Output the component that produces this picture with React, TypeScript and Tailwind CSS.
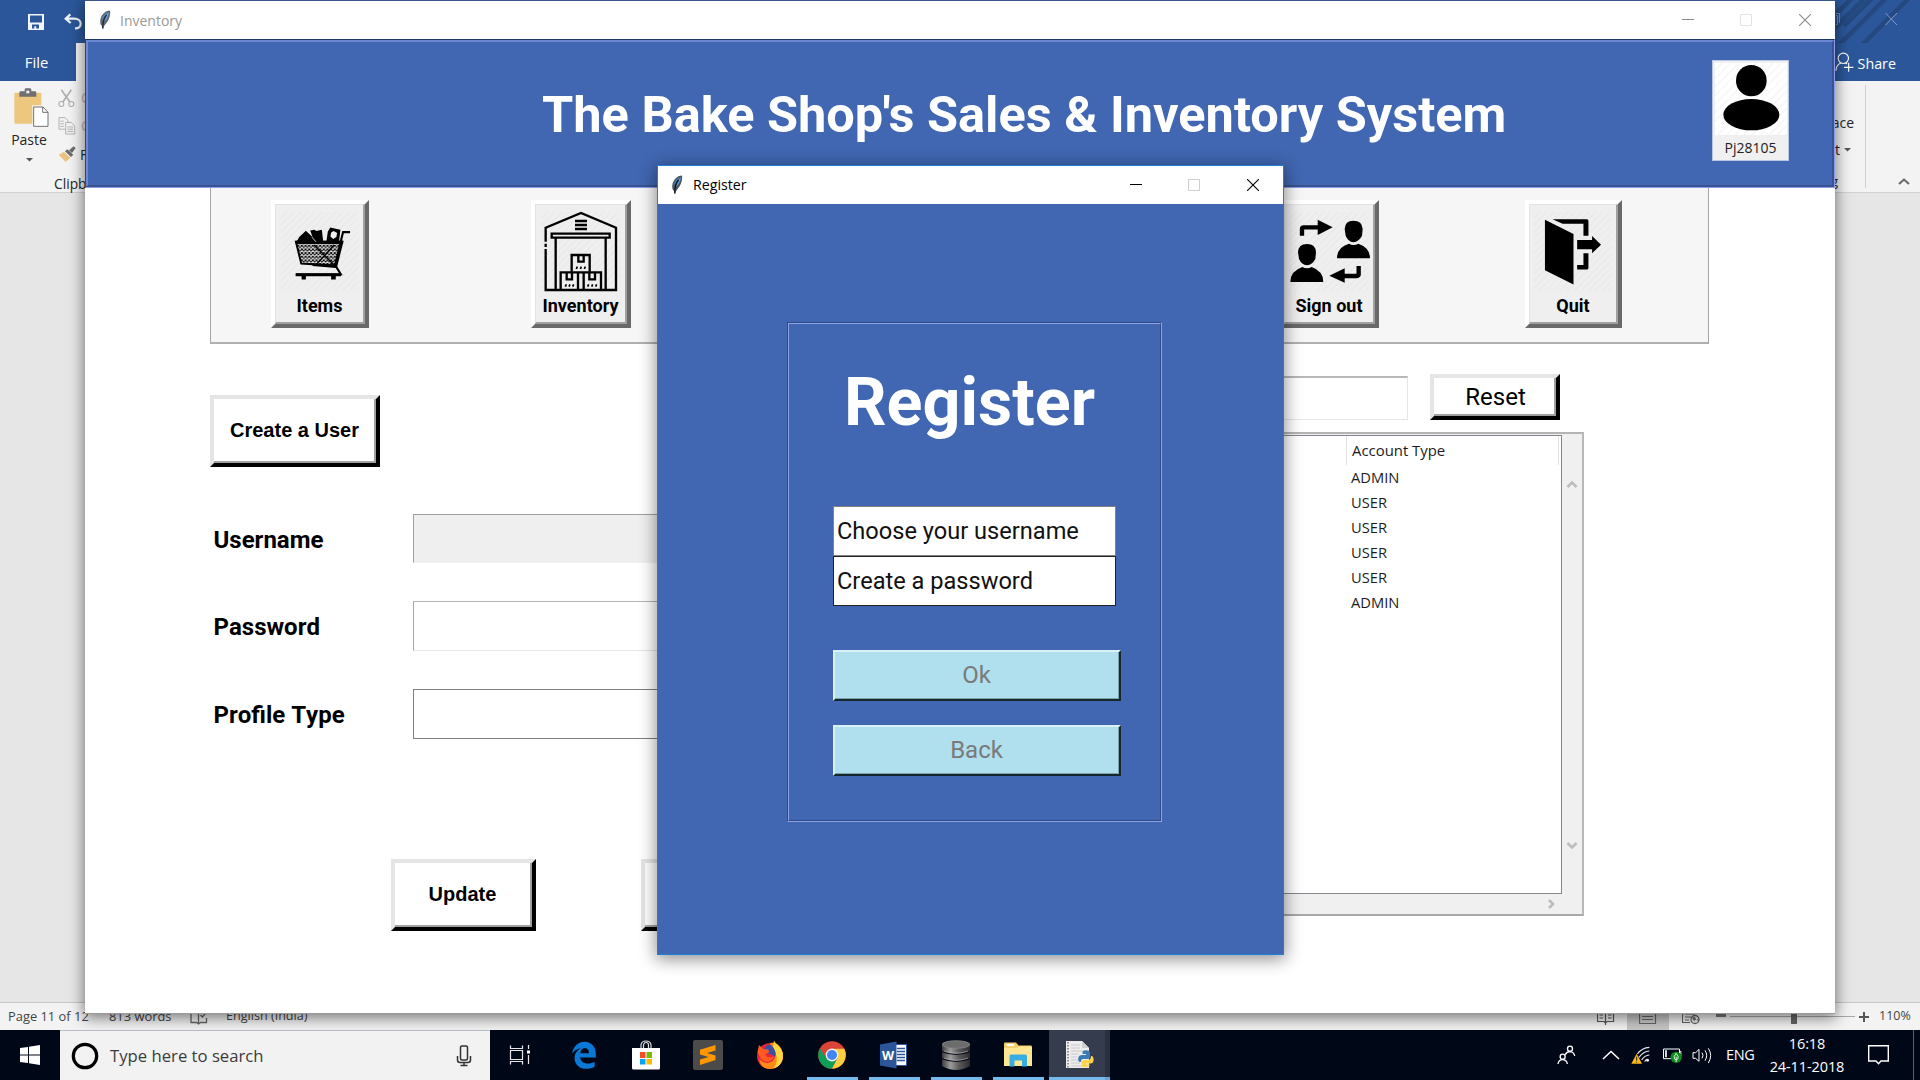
import type { ReactNode } from 'react';

const ui = "font-['Open_Sans','Noto_Sans',sans-serif]";

function Feather({ dim = false }: { dim?: boolean }) {
  return (
    <svg width="12" height="20" viewBox="0 0 12 20" className={dim ? 'opacity-90' : ''}>
      <path d="M11 0.5C7 0.5 3 4 1.6 8.5C0.8 11.5 1.2 14.5 2.6 15.6C3 16 3.3 16.4 4 19.6C4.6 17 5 15.6 6.2 14.4C9.6 11.4 11.8 5 11 0.5Z" fill="#4a5560" />
      <path d="M10 2C7.4 4 6 7.5 5.2 12C7.6 9.6 9.8 5.6 10 2Z" fill="#5c9be0" />
      <path d="M8.600 2C5.400 3.400 3 7 2.600 10.600C4.400 8 6.400 4.800 8.600 2Z" fill="#4a86cc" />
      <path d="M7.500 5C5 8 3.600 12 3.700 18.600" stroke="#0b1420" strokeWidth="1.300" fill="none" />
    </svg>
  );
}

function WindowControls({ color, dim }: { color: string; dim: string }) {
  return (
    <div className="flex items-center">
      <div className="flex w-[58px] justify-center"><svg width="12" height="12"><path d="M0 5.5H12" stroke={color} /></svg></div>
      <div className="flex w-[58px] justify-center"><svg width="12" height="12"><path d="M.5 .5H11.5V11.5H.5Z" stroke={dim} fill="none" /></svg></div>
      <div className="flex w-[60px] justify-center"><svg width="12" height="12"><path d="M0 0L12 12M12 0L0 12" stroke={color} strokeWidth="1.1" /></svg></div>
    </div>
  );
}

/* ---------- Word in the background ---------- */

function WordBackground() {
  return (
    <div className={`flex h-[1030px] w-full flex-col bg-[#e6e6e6] text-[#262626] ${ui}`}>
      <div className="flex h-[43px] shrink-0 items-center justify-between bg-[#2b579a] pl-[28px]">
        <div className="flex items-center gap-[19px]">
          <svg width="16" height="16" viewBox="0 0 16 16"><path fillRule="evenodd" d="M0 0H16V16H0ZM2 1.5V8.5H14V1.5ZM4 10.5V14.5H6.3V12.2H8.2V14.5H11V10.5Z" fill="#f1f4f9" /></svg>
          <svg width="19" height="17" viewBox="190 38 57 51"><path d="M212 42L198 55L213 68M199 55H224C236 55 243 62 243 70C243 79 236 84 226 84" stroke="#f1f4f9" strokeWidth="6.5" fill="none" /></svg>
        </div>
        <svg width="84" height="43" viewBox="0 0 84 43">
          <path d="M-4 18L18 -4M-4 31L31 -4M8 26L38 -4M-4 52L52 -4M21 50L75 -4" stroke="#24497f" strokeWidth="4.500" />
          <path d="M0 15.500H1.500V24.500H0M0 13.500H3.500V23" stroke="#6f8fbf" fill="none" />
          <path d="M49.500 13L61 25M61 13L49.500 25" stroke="#7f9bc8" />
        </svg>
      </div>
      <div className="flex h-[38px] shrink-0 bg-[#2b579a] text-white">
        <div className="flex w-[76px] items-center justify-center pr-[3px] text-[14.800px]">File</div>
        <div className="w-[90px] bg-[#f3f3f3]" />
        <div className="ml-auto flex items-center gap-1 pr-[24px]">
          <svg width="19" height="20" viewBox="1190 157 57 60"><g stroke="#fff" strokeWidth="3.500" fill="none"><circle cx="1215" cy="176" r="15.500" /><path d="M1193 213C1193 202 1200 193 1208 190M1222 190L1226 193M1231 189V216M1217 203H1245" /></g></svg>
          <span className="pt-[3px] text-[14.300px]">Share</span>
        </div>
      </div>
      <div className="flex h-[112px] shrink-0 justify-between border-b border-[#d2d2d2] bg-[#f3f3f3]">
        <div className="flex">
          <div className="flex w-[58px] flex-col items-center pt-[7px]">
            <svg width="35" height="39" viewBox="44 265 105 117" className="ml-[5px]">
              <rect x="45" y="279" width="81" height="93" rx="3" fill="#eec77e" />
              <path d="M60 291V279Q60 275 65 275H76V270Q76 266 80 266H91Q96 266 96 270V275H106Q111 275 111 279V291Z" fill="#6f6f6f" />
              <rect x="81" y="273" width="9" height="8" fill="#f3f3f3" />
              <path d="M99 317H135L150 334V385H99Z" fill="#f3f3f3" />
              <path d="M103 322H131L146 338V380H103Z" fill="#fff" stroke="#737373" strokeWidth="3" />
              <path d="M130 322V338H146" stroke="#737373" strokeWidth="3" fill="none" />
            </svg>
            <span className="mt-[2px] text-[14px] leading-[22px]">Paste</span>
            <svg width="7" height="4" className="mt-[7px]"><path d="M0 0H7L3.500 3.500Z" fill="#555" /></svg>
          </div>
          <div className="flex flex-col">
            <div className="flex h-[28px] items-center gap-[6px] pt-[6px] text-[14px] text-[#b5b0b8]">
              <svg width="17" height="18" viewBox="173 266 51 54"><g stroke="#b1aeb3" strokeWidth="3.500" fill="none"><circle cx="183" cy="311" r="7.500" /><circle cx="213" cy="311" r="7.500" /><path d="M183 268L208 304M213 268L188 304" strokeWidth="5" /></g></svg>
              <span>Cut</span>
            </div>
            <div className="flex h-[28px] items-center gap-[5px] pt-[7px] text-[14px] text-[#b5b0b8]">
              <svg width="18" height="18" viewBox="173 350 54 56"><g stroke="#b1aeb3" strokeWidth="3" fill="#f3f3f3"><path d="M175 352H194L203 361V388H175Z" /><path d="M179 363H190M179 371H190M179 379H190" /><path d="M196 367H213L224 378V403H196Z" /><path d="M201 381H219M201 388H219M201 395H219" /></g></svg>
              <span>Copy</span>
            </div>
            <div className="flex h-[28px] items-center gap-[4px] pt-[8px] text-[14px]">
              <svg width="18" height="16" viewBox="174 437 54 48"><path d="M176 463L192 455L211 472L197 485Z" fill="#ecc37c" /><path d="M195 453L202 447L220 463L213 470ZM207 450L221 438L227 443L216 458Z" fill="#6b6b6b" /></svg>
              <span>Format Painter</span>
            </div>
            <span className="mt-[8px] -ml-1 text-[13.800px] leading-[24px]">Clipboard</span>
          </div>
        </div>
        <div className="flex">
          <div className="flex w-[60px] flex-col items-end pr-[17px] text-[14px]">
            <svg width="7" height="4" className="mt-[15px] mr-[2px]"><path d="M0 0H7L3.500 3.500Z" fill="#555" /></svg>
            <span className="mt-[16px] -mr-[6px] leading-[22px]">Replace</span>
            <span className="-mr-[3px] mt-[5px] flex items-center gap-1 leading-[22px]">Select<svg width="7" height="4"><path d="M0 0H7L3.500 3.500Z" fill="#555" /></svg></span>
            <span className="mt-[9px] mr-[10px] text-[13.500px] leading-[22px]">Editing</span>
          </div>
          <div className="my-1 w-px bg-[#d0d0d0]" />
          <div className="flex w-[54px] items-end pb-[7px] pl-[32px]">
            <svg width="12" height="7"><path d="M1 6L6 1.500L11 6" stroke="#666" strokeWidth="2" fill="none" /></svg>
          </div>
        </div>
      </div>
      <div className="grow" />
      <div className="flex h-[28px] shrink-0 items-center border-t border-[#c6c6c6] bg-[#f3f3f3] text-[12.900px] text-[#444]">
        <span className="w-[101px] pl-2 whitespace-nowrap">Page 11 of 12</span>
        <span className="w-[81px] pl-2 whitespace-nowrap">813 words</span>
        <svg width="18" height="16" className="ml-2"><path d="M1 3V13.500H6.500L8.500 15L10.500 13.500H16.500V9M1 3H8.500V14M10.500 6L12.500 8L16.500 3" stroke="#666" strokeWidth="1.300" fill="none" /></svg>
        <span className="ml-[18px] text-[12.600px] whitespace-nowrap">English (India)</span>
        <div className="ml-auto flex h-full items-center">
          <svg width="18" height="16"><path d="M.5 2.500H7L8.500 4L10 2.500H16.500V12.500H10L8.500 14L7 12.500H.5ZM8.500 4V16M2.500 6H6M2.500 9H6M11 6H14.500M11 9H14.500" stroke="#555" strokeWidth="1.200" fill="none" /></svg>
          <div className="ml-[12px] flex h-full w-[42px] items-center justify-center bg-[#c8c8c8]"><svg width="18" height="17"><path d="M.5 0V15.500H16.500V0M3 5.500H14M3 8.500H14M3 11.500H14" stroke="#666" strokeWidth="1.200" fill="none" /></svg></div>
          <svg width="18" height="16" className="ml-[13px]"><path d="M.5 1V13.500H8M3 5H13M3 8H9M3 11H7" stroke="#666" strokeWidth="1.200" fill="none" /><circle cx="13" cy="10.500" r="4" fill="#ececec" stroke="#666" strokeWidth="1.300" /><path d="M10 8.500L13 8L14 10.500L12 12ZM14.500 11L16.500 9.500V12Z" fill="#666" /></svg>
          <div className="ml-[16px] h-[3px] w-[10px] -translate-y-[1px] bg-[#777]" />
          <div className="ml-1 flex h-px w-[125px] items-center bg-[#a8a8a8]"><div className="ml-[61px] h-[15px] w-[6px] bg-[#666]" /></div>
          <svg width="12" height="12" className="ml-[3px]"><path d="M6 1V11M1 6H11" stroke="#555" strokeWidth="2" /></svg>
          <span className="mr-[9px] ml-[9px] w-[32px] text-[12.500px]">110%</span>
        </div>
      </div>
    </div>
  );
}

/* ---------- Inventory window ---------- */

function ToolButton({ label, icon, className }: { label: string; icon: ReactNode; className: string }) {
  return (
    <div className={`h-[128px] shrink-0 border-4 border-t-white border-r-[#696969] border-b-[#696969] border-l-white ${className}`}>
      <div className="flex h-full flex-col items-center border-t border-r-2 border-b-2 border-l border-t-[#e3e3e3] border-r-[#a0a0a0] border-b-[#a0a0a0] border-l-[#e3e3e3] bg-[#efefef] pt-[7px]">
        <div className="flex h-[79px] w-[78px] justify-center bg-[repeating-linear-gradient(135deg,#efefef_0px,#efefef_3px,#ebebeb_3px,#ebebeb_5px)]">{icon}</div>
        <span className="text-[18px] leading-[29px] font-bold whitespace-nowrap">{label}</span>
      </div>
    </div>
  );
}

function CartIcon() {
  return (
    <svg width="78" height="79" viewBox="245 97 235 237">
      <defs>
        <pattern id="mesh" width="11" height="11" patternUnits="userSpaceOnUse"><rect width="11" height="11" fill="#efefef" /><path d="M0 0L11 11M11 0L0 11" stroke="#000" strokeWidth="2.800" /></pattern>
      </defs>
      <path d="M290 186H430L412 258L306 252Z" fill="url(#mesh)" stroke="#000" strokeWidth="6" />
      <path d="M289 183H432V193H289Z" />
      <path d="M293 184L300 172L320 153L340 172L333 152L345 150L352 154L368 150L372 184Z" />
      <path d="M382 184L386 156L393 143L424 150L420 184Z" />
      <path d="M396 158L404 154L414 160L412 172L402 178L394 170Z" fill="#efefef" />
      <path d="M338 172L350 186" stroke="#efefef" strokeWidth="2.500" />
      <path d="M453 157H432L408 256L425 284H290M340 256L410 262" stroke="#000" strokeWidth="6.500" fill="none" />
      <path d="M345 196L405 256M405 196L350 256" stroke="#000" strokeWidth="4" fill="none" />
      <path d="M307 284H320V300H307ZM396 284H410V300H396ZM289 282H426V290H289Z" />
    </svg>
  );
}

function WarehouseIcon() {
  return (
    <svg width="80" height="81" viewBox="1025 94 240 243" className="-mt-[1px] shrink-0">
      <g stroke="#000" strokeWidth="7" fill="none">
        <path d="M1039 186V144L1145 100L1250 144V331H1039V208M1039 192V202" />
        <path d="M1057 162H1231V174H1057ZM1069 175V330M1219 175V330" />
        <path d="M1127 124H1163M1127 136H1163M1127 148H1163" />
        <path d="M1117 276V226H1171V276M1137 226V246H1153V226" />
        <path d="M1084 330V278H1205V330M1136 280V330M1153 280V330M1102 280V299H1118V280M1170 280V299H1187V280" />
      </g>
      <path d="M1131 268L1134 261M1143 268L1146 261M1155 268L1158 261M1098 321L1101 314M1109 321L1112 314M1120 321L1123 314M1165 321L1168 314M1177 321L1180 314M1189 321L1192 314" stroke="#000" strokeWidth="5" />
    </svg>
  );
}

function SwitchUserIcon() {
  return (
    <svg width="80" height="79" viewBox="61 97 240 237" className="shrink-0 translate-x-px">
      <path d="M225 148Q226 123 251 123Q278 123 279 148L277 168Q268 186 251 188Q235 186 228 168ZM202 236Q202 202 238 192Q252 200 266 192Q301 204 301 236Z" />
      <path d="M85 218Q86 193 112 193Q138 193 139 218L137 238Q128 255 112 257Q96 255 88 238ZM62 307Q62 274 98 262Q112 270 126 262Q161 274 161 307Z" />
      <path d="M97 168V147Q97 143 102 143H146" stroke="#000" strokeWidth="13" fill="none" />
      <path d="M144 120L189 143L144 166Z" />
      <path d="M267 259V284Q267 289 261 289H222" stroke="#000" strokeWidth="13" fill="none" />
      <path d="M225 266L179 288L225 309Z" />
    </svg>
  );
}

function DoorIcon() {
  return (
    <svg width="78" height="79" viewBox="796 97 235 237">
      <path d="M829 120L915 163V315L829 272Z" />
      <path d="M852 118H955Q960 118 960 123V168H945V132H882ZM926 181H971V169L998 195L971 221V209H926ZM945 221H960V265Q960 270 955 270H926V256H945Z" />
    </svg>
  );
}

function RaisedButton({ children, className }: { children?: ReactNode; className: string }) {
  return (
    <div className={`shrink-0 border-4 border-t-[#e5e5e5] border-r-black border-b-black border-l-[#e5e5e5] ${className}`}>
      <div className="flex h-full items-center justify-center border-r-2 border-b-2 border-[#a0a0a0] bg-white">{children}</div>
    </div>
  );
}

function Header() {
  return (
    <div className="flex h-[149px] shrink-0 justify-between border border-t-[#1f3566] border-r-[#8c9bea] border-b-[#8c9bea] border-l-[#2b4580]">
      <div className="flex grow justify-between border-2 border-t-[#6c88d2] border-r-[#38538f] border-b-[#38538f] border-l-[#6c88d2] bg-[#4167b2] pr-[43px] pl-[454px]">
        <h1 className="pt-[43px] text-[50.500px] leading-[60px] font-bold whitespace-nowrap text-white">The Bake Shop's Sales &amp; Inventory System</h1>
        <div className={`mt-[18px] flex h-[101px] w-[77px] flex-col items-center border border-[#b9c6e4] bg-[#f0f0f0] pt-[2px] ${ui}`}>
          <div className="h-[72px] w-[72px] bg-[repeating-linear-gradient(135deg,#ffffff_0px,#ffffff_4px,#f8f8f8_4px,#f8f8f8_6px)]">
            <svg width="72" height="72" viewBox="824 189 216 216"><ellipse cx="933" cy="242" rx="46" ry="47" /><ellipse cx="933" cy="344" rx="84" ry="47" /></svg>
          </div>
          <span className="mt-[2px] text-[14px] leading-[22px] text-[#222]">Pj28105</span>
        </div>
      </div>
    </div>
  );
}

const accountTypes = ['ADMIN', 'USER', 'USER', 'USER', 'USER', 'ADMIN'];

function AccountTable() {
  return (
    <div className={`mt-[12px] -mr-px flex h-[484px] w-[484px] flex-col border-2 border-t-[#b4b4b4] border-r-[#b8b8b8] border-b-[#a8a8a8] border-l-[#a0a0a0] bg-[#f0f0f0] text-[#1c1c1c] ${ui}`}>
      <div className="flex h-[460px] shrink-0">
        <div className="mt-px w-[460px] border border-[#828790] bg-white">
          <div className="flex h-[29px]">
            <div className="w-[243px]" />
            <div className="flex grow items-center border-x border-[#e3e3e3] pl-[5px] text-[14.900px]">Account Type</div>
            <div className="w-[2px]" />
          </div>
          {accountTypes.map((type, i) => (
            <div key={i} className="flex h-[25px] items-center pl-[248px] text-[14.700px]">{type}</div>
          ))}
        </div>
        <div className="flex grow flex-col items-center justify-between pt-[46px] pb-[44px]">
          <svg width="12" height="8"><path d="M1.500 7L6 2.500L10.500 7" stroke="#bdbdbd" strokeWidth="2.600" fill="none" /></svg>
          <svg width="12" height="8"><path d="M1.500 1L6 5.500L10.500 1" stroke="#bdbdbd" strokeWidth="2.600" fill="none" /></svg>
        </div>
      </div>
      <div className="flex grow items-center justify-end pr-[26px]">
        <svg width="9" height="10"><path d="M2 1L6 5L2 9" stroke="#bdbdbd" strokeWidth="2.600" fill="none" /></svg>
      </div>
    </div>
  );
}

const fields = [
  { label: 'Username', box: 'h-[49px] border-t-[#a0a0a0] border-l-[#a0a0a0] border-b-[#f2f2f2] border-r-[#f2f2f2] bg-[#efefef]' },
  { label: 'Password', box: 'h-[50px] border-t-[#b4b4b4] border-l-[#a8a8a8] border-b-[#e6e6e6] border-r-[#e6e6e6] bg-white' },
  { label: 'Profile Type', box: 'h-[50px] border-[#7e7e7e] bg-white' },
];

function InventoryWindow() {
  return (
    <div className="absolute top-0 left-[85px] flex h-[1014px] w-[1750px] flex-col border-t border-b border-t-[#3a5588] border-b-[#999] bg-white shadow-[0_3px_14px_1px_rgba(0,0,0,0.5)]">
      <div className={`flex h-[38px] shrink-0 items-center ${ui}`}>
        <div className="pl-[14px]"><Feather dim /></div>
        <span className="pl-[9px] text-[14px] text-[#999]">Inventory</span>
        <div className="ml-auto"><WindowControls color="#8a8a8a" dim="#e3e3e3" /></div>
      </div>
      <Header />
      <div className="ml-[125px] flex h-[156px] w-[1499px] shrink-0 border-x-[1.500px] border-b-2 border-[#a5a5a5] border-b-[#b0b0b0] bg-[#f6f6f6] pt-[12px] pl-[60px]">
        <ToolButton label="Items" icon={<CartIcon />} className="w-[98px]" />
        <ToolButton label="Inventory" icon={<WarehouseIcon />} className="ml-[162px] w-[100px]" />
        <ToolButton label="Sign out" icon={<SwitchUserIcon />} className="ml-[649px] w-[99px]" />
        <ToolButton label="Quit" icon={<DoorIcon />} className="ml-[146px] w-[97px]" />
      </div>
      <div className="flex grow pl-[125px]">
        <div className="flex w-[600px] flex-col pt-[51px]">
          <RaisedButton className="h-[72px] w-[170px]"><span className="pl-px font-['Liberation_Sans',Arial,sans-serif] text-[20px] font-bold">Create a User</span></RaisedButton>
          <div className="mt-[47px] flex flex-col gap-[38px]">
            {fields.map((f) => (
              <div key={f.label} className="flex items-center">
                <span className="w-[203px] pt-[2px] pl-[3.500px] text-[24px] leading-[46px] font-bold [font-kerning:none]">{f.label}</span>
                <div className={`w-[380px] border ${f.box}`} />
              </div>
            ))}
          </div>
          <div className="mt-[120px] flex gap-[105px] pl-[181px]">
            <RaisedButton className="h-[72px] w-[145px]"><span className="font-['Liberation_Sans',Arial,sans-serif] text-[20px] font-bold">Update</span></RaisedButton>
            <RaisedButton className="h-[72px] w-[145px]" />
          </div>
        </div>
        <div className="flex flex-col items-end pl-[290px]">
          <div className="flex items-start pt-[30px] pr-[23px]">
            <div className="mt-[2px] h-[44px] w-[230px] border border-t-2 border-t-[#b8b8b8] border-r-[#e6e6e6] border-b-[#e6e6e6] border-l-[#b0b0b0]" />
            <RaisedButton className="ml-[22px] h-[46px] w-[130px]"><span className="pt-[2px] pl-[3px] text-[24px] [font-kerning:none]">Reset</span></RaisedButton>
          </div>
          <AccountTable />
        </div>
      </div>
    </div>
  );
}

/* ---------- Register dialog ---------- */

function RegisterButton({ label, className }: { label: string; className: string }) {
  return (
    <div className={`h-[51px] w-[288px] border-t-2 border-r-2 border-b-2 border-l-2 border-t-[#d9f0f6] border-r-[#16282e] border-b-[#16282e] border-l-[#d9f0f6] ${className}`}>
      <div className="flex h-full items-center justify-center border-r border-b border-[#7fa3ad] bg-[#b0dfed] text-[24px] text-[#7a7a7a]">{label}</div>
    </div>
  );
}

function RegisterWindow() {
  return (
    <div className="absolute top-[165px] left-[657px] flex h-[790px] w-[627px] flex-col border border-[#1b7fd6] bg-[#4167b2] shadow-[0_3px_16px_1px_rgba(0,0,0,0.45)]">
      <div className={`flex h-[38px] shrink-0 items-center bg-white ${ui}`}>
        <div className="pl-[13px]"><Feather /></div>
        <span className="pl-[10px] text-[14.200px] text-black">Register</span>
        <div className="ml-auto"><WindowControls color="#000" dim="#cfcfcf" /></div>
      </div>
      <div className="mt-[118px] ml-[129px] h-[500px] w-[375px] border border-t-[#2d4a86] border-r-[#8fa4e6] border-b-[#8fa4e6] border-l-[#2d4a86]">
        <div className="flex h-full flex-col border border-t-[#8fa4e6] border-r-[#2d4a86] border-b-[#2d4a86] border-l-[#8fa4e6] pl-[44px]">
          <h2 className="mt-[38px] pl-[11px] text-[66.500px] leading-[80px] font-bold text-white">Register</h2>
          <div className="mt-[64px] flex h-[50px] w-[283px] items-center border border-[#85817c] bg-white pt-[2px] pl-[3px] text-[23.600px] whitespace-nowrap text-[#111]">Choose your username</div>
          <div className="flex h-[50px] w-[283px] items-center border border-[#222] bg-white pt-[2px] pl-[3px] text-[23.600px] whitespace-nowrap text-[#111]">Create a password</div>
          <RegisterButton label="Ok" className="mt-[44px]" />
          <RegisterButton label="Back" className="mt-[24px]" />
        </div>
      </div>
    </div>
  );
}

/* ---------- Taskbar ---------- */

function Slot({ children, className = '' }: { children: ReactNode; className?: string }) {
  return <div className={`flex h-full w-[62px] shrink-0 items-center justify-center ${className}`}>{children}</div>;
}

function RunningSlot({ children }: { children: ReactNode }) {
  return (
    <div className="flex h-full w-[62px] shrink-0 flex-col items-center">
      <div className="flex h-[47px] items-center pt-[3px]">{children}</div>
      <div className="h-[3px] w-[51px] bg-[#76b9ed]" />
    </div>
  );
}

function Taskbar() {
  return (
    <div className={`flex h-[50px] w-full bg-[#000818] text-white ${ui}`}>
      <div className="flex w-[60px] items-center justify-center">
        <svg width="20" height="20"><path d="M0 3L8 1.900V9.400H0ZM9 1.700L20 0V9.400H9ZM0 10.500H8V18L0 17ZM9 10.500H20V20L9 18.300Z" fill="#fff" /></svg>
      </div>
      <div className="flex w-[430px] items-center border-t border-[#b9bcc4] bg-[#f2f2f2]">
        <svg width="28" height="28" className="ml-[11px]"><circle cx="14" cy="14" r="11.700" stroke="#000" strokeWidth="3.200" fill="none" /></svg>
        <span className="ml-[11px] text-[16.700px] text-[#3b3b3b]">Type here to search</span>
        <svg width="16" height="22" className="mr-[18px] ml-auto"><g stroke="#333" strokeWidth="1.500" fill="none"><rect x="4.500" y="1" width="7" height="14" rx="1.500" /><path d="M1.500 11V15Q1.500 17.500 4 17.500H12Q14.500 17.500 14.500 15V11M8 17.500V20.500M4.500 20.500H11.500" /></g></svg>
      </div>
      <Slot className="pr-[2px]">
        <svg width="22" height="20"><path d="M1.500 .5V3.500H13.500V.5M1.500 5.500H13.500V14.500H1.500ZM1.500 19.500V16.500H13.500V19.500M19.500 0V4M19.500 10V19" stroke="#e8e8e8" strokeWidth="1.200" fill="none" /><rect x="18" y="5.500" width="3" height="3" fill="#fff" /></svg>
      </Slot>
      <div className="w-px" />
      <Slot>
        <svg width="26" height="28" viewBox="0 0 26 28"><path d="M1 12.500C2.500 5 7.500 .8 13.500 .8C20.500 .8 24.800 6 24.800 12.800V16.500H9.200C9.500 20.500 13 22.600 16.800 22.600C19.500 22.600 21.800 21.800 23.600 20.800V25.800C21 27.200 18.300 27.800 15.300 27.800C8.300 27.800 3.600 23.300 3.600 16.900C3.600 12.600 6 9.200 10 7.300C6.500 7.600 3.200 9.600 1 12.500ZM9.300 12.200H18C18 9 16.200 7 13.700 7C11.200 7 9.600 9.200 9.300 12.200Z" fill="#0a78d6" /></svg>
      </Slot>
      <Slot>
        <svg width="30" height="30"><path d="M1 8H29V28Q29 29.500 27.500 29.500H2.500Q1 29.500 1 28Z" fill="#fff" /><path d="M10 8V5Q10.500 1 15 1Q19.500 1 20 5V8M12.500 8V5Q13 2.500 15 2.500Q17.500 2.500 17.500 5V8" stroke="#ddd" strokeWidth="1.200" fill="none" /><path d="M9 12H14.500V18H9Z" fill="#f25022" /><path d="M15.500 12H21V18H15.500Z" fill="#7fba00" /><path d="M9 19H14.500V24.500H9Z" fill="#00a4ef" /><path d="M15.500 19H21V24.500H15.500Z" fill="#ffb900" /></svg>
      </Slot>
      <Slot>
        <svg width="30" height="30"><rect width="30" height="30" rx="2" fill="#4b4b4b" /><path d="M7 9.800L22.500 5V10.400L14 13L22.500 15.500V20L7 25V19.600L15.500 17L7 14.500Z" fill="#ff9800" /></svg>
      </Slot>
      <Slot>
        <svg width="30" height="30" viewBox="0 0 30 30">
          <circle cx="15" cy="16" r="13" fill="#e8253b" />
          <path d="M15 3C22 1 28 8 28 16C28 23.500 22 29 15 29C8 29 4 24 4.500 19C9 25 18 24 20 17C21 12 17 9 15 3Z" fill="#ff8a16" />
          <path d="M19 0.500C20 4 28 7 28 16C28 22 24 27 18.500 28.500C24 22 22 13 17.500 8Z" fill="#ffd83d" />
          <path d="M11 6Q15 3 18 7Q22 13 20 17Q16 13 13 14L9 9Z" fill="#3b4fa8" />
          <path d="M2.500 12L4 5L8 9L13 9.500L14.500 12L10 14.500C12 18 16 18 19 16C18 22 10 24 6 19Z" fill="#ff5a1f" />
        </svg>
      </Slot>
      <RunningSlot>
        <svg width="28" height="28" viewBox="-14 -14 28 28">
          <circle r="13.800" fill="#db4437" />
          <path d="M-11.950 -6.900A13.800 13.800 0 0 0 0 13.800L5.500 3.200L-5.500 3.200Z" fill="#0f9d58" />
          <path d="M0 13.800A13.800 13.800 0 0 0 12.300 -6.300H0L5.500 3.200Z" fill="#ffcd40" />
          <path d="M-11.950 -6.900L-5.500 3.200L0 -6.300H12.300" fill="#db4437" />
          <circle r="6.400" fill="#f1f1f1" /><circle r="5" fill="#4285f4" />
        </svg>
      </RunningSlot>
      <RunningSlot>
        <svg width="28" height="28"><path d="M15 3.500H26.500V24.500H15Z" fill="#fff" stroke="#2b579a" /><path d="M17 7.500H25M17 10.500H25M17 13.500H25M17 16.500H25M17 19.500H25" stroke="#2b579a" strokeWidth="1.400" /><path d="M0 3.500L16.500 .5V27.500L0 24.500Z" fill="#2b579a" /><text x="8" y="18.500" textAnchor="middle" fontSize="12.500" fontWeight="700" fill="#fff" fontFamily="Open Sans, sans-serif">W</text></svg>
      </RunningSlot>
      <RunningSlot>
        <svg width="28" height="30"><defs><linearGradient id="disk"><stop offset="0" stopColor="#3c3c3c" /><stop offset=".3" stopColor="#9c9c9c" /><stop offset=".6" stopColor="#5c5c5c" /><stop offset="1" stopColor="#2c2c2c" /></linearGradient></defs>
          <path d="M0 4V26Q14 34 28 26V4Z" fill="url(#disk)" /><path d="M0 11.500Q14 17.500 28 11.500M0 18.500Q14 24.500 28 18.500" stroke="#0a0f1c" strokeWidth="1.200" fill="none" /><path d="M2 11Q14 15.500 26 11M2 18Q14 22.500 26 18" stroke="#b8b8b8" strokeWidth=".6" fill="none" /><ellipse cx="14" cy="4.500" rx="13.800" ry="3.800" fill="#6c6c6c" stroke="#888" strokeWidth=".8" /></svg>
      </RunningSlot>
      <RunningSlot>
        <svg width="28" height="26"><path d="M0 1.500Q0 .5 1 .5H12L14.500 3.500H27.500V24H0Z" fill="#f3cf6b" /><path d="M2.500 2H10V4H2.500Z" fill="#fff" /><path d="M0 6H13L15 4.500H28V24H0Z" fill="#ffe693" /><path d="M5.500 14Q5.500 12.500 7 12.500H21.500Q23 12.500 23 14V24.500H18V18.500H10.500V24.500H5.500Z" fill="#37aee2" /></svg>
      </RunningSlot>
      <div className="flex h-full">
        <div className="flex w-[56px] flex-col items-center bg-[#343c4e]">
          <div className="flex h-[47px] items-center pt-[3px] pl-[5px]">
            <svg width="29" height="30"><path d="M1 1H17L24 8V28H1Z" fill="#ededed" /><path d="M17 1V8H24Z" fill="#cfcfcf" /><path d="M3 2V28" stroke="#777" strokeWidth="1.500" strokeDasharray="1.500 1.500" /><path d="M6 5H15M6 8H15M6 11H20M6 14H13M6 17H12M6 20H13M6 23H15M6 26H18" stroke="#c9c9c9" /><path d="M19 10.500Q25 9.500 25 13V17Q25 19 22 19H18Q16 19 16 22H14.500Q12.500 21 13.500 17Q14 15 17 15H21V14H17.500V12Q17.500 11 19 10.500Z" fill="#3c7ab5" /><path d="M22 27Q16.500 27.500 16.500 25V22.500Q16.500 20 19.500 20H23Q26 20 26 16H27Q29 17 28.500 21Q28 23.500 25.500 23.500H21V24.500H24.500V26Q24 27 22 27Z" fill="#ffd34a" /></svg>
          </div>
          <div className="h-[3px] w-full bg-[#76b9ed]" />
        </div>
        <div className="flex w-[5px] flex-col justify-end bg-[#2a3040]"><div className="h-[3px] bg-[#6aa3d2]" /></div>
      </div>
      <div className="ml-auto flex items-center">
        <svg width="19" height="20" viewBox="173 193 57 60"><g stroke="#fff" strokeWidth="4" fill="none"><circle cx="212" cy="204" r="7.500" /><circle cx="190" cy="228" r="7.500" /><path d="M176 250Q178 237 190 237Q202 237 204 250M198 222Q201 213 212 213Q224 214 226 226" /></g></svg>
        <svg width="18" height="10" className="ml-[26px]"><path d="M1 9L9 1.500L17 9" stroke="#fff" strokeWidth="1.500" fill="none" /></svg>
        <svg width="20" height="18" viewBox="396 202 58 54" className="ml-[11px]"><g stroke="#e8e8e8" strokeWidth="3.600" fill="none"><path d="M414 226Q428 207 450 206M419 236Q432 218 450 217M427 244Q436 230 450 229" /><path d="M436 249Q440 242 444 241" /></g><circle cx="445" cy="245" r="4" fill="#fff" /><path d="M412 225L428 255H396Z" fill="#fdb913" /><path d="M412 234V246M412 249V252" stroke="#222" strokeWidth="3" /></svg>
        <svg width="21" height="18" viewBox="488 204 60 54" className="ml-[11px]"><path d="M491 213H539V242H491ZM539 220H543V233H539" stroke="#fff" strokeWidth="3" fill="none" /><path d="M496 217H501V238H496Z" fill="#fff" /><circle cx="529" cy="238" r="17" fill="#0f8a1c" /><path d="M529 226Q538 236 534 243L529 246L524 243Q520 236 529 226ZM529 236V252" stroke="#fff" strokeWidth="2.500" fill="none" /></svg>
        <svg width="22" height="18" viewBox="574 196 66 54" className="ml-[9px]"><path d="M577 216H585L595 206V242L585 233H577Z" stroke="#fff" strokeWidth="3" fill="none" /><path d="M604 216Q610 224 604 233M613 209Q623 224 613 240M623 203Q637 224 623 247" stroke="#fff" strokeWidth="3" fill="none" /></svg>
        <span className="ml-[12px] w-[31px] text-[14.500px] tracking-[-0.3px]">ENG</span>
        <div className="ml-[10px] flex w-[80px] flex-col items-center text-[14.500px] leading-[23px] tracking-[-0.1px]"><span>16:18</span><span>24-11-2018</span></div>
        <svg width="21" height="20" className="ml-[21px]"><path d="M.7 .7H20.300V16H13L10.500 18.800L8 16H.7Z" stroke="#fff" strokeWidth="1.400" fill="none" /></svg>
        <div className="ml-[24px] h-[50px] w-px bg-[#5a6070]" />
        <div className="w-[6px]" />
      </div>
    </div>
  );
}

export default function App() {
  return (
    <div className="relative flex h-[1080px] w-[1920px] flex-col overflow-hidden font-['Roboto',sans-serif] text-black">
      <div className="relative h-[1030px] shrink-0 overflow-hidden">
        <WordBackground />
        <InventoryWindow />
        <RegisterWindow />
      </div>
      <Taskbar />
    </div>
  );
}
